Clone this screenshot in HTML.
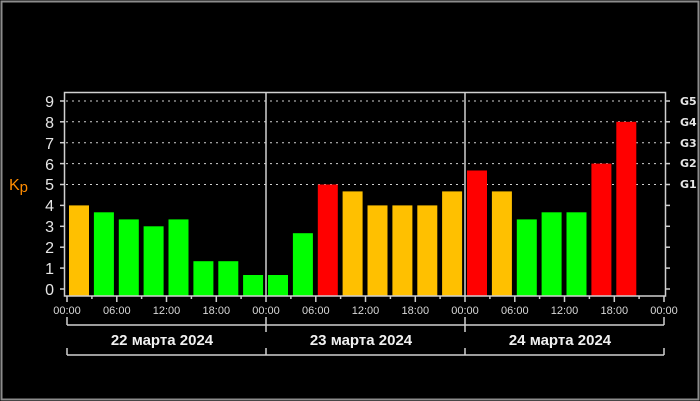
<!DOCTYPE html>
<html><head><meta charset="utf-8"><style>
html,body{margin:0;padding:0;background:#000;width:700px;height:401px;overflow:hidden}
svg{display:block}
</style></head><body>
<svg width="700" height="401" xmlns="http://www.w3.org/2000/svg" font-family="Liberation Sans, DejaVu Sans, sans-serif">
<rect x="0" y="0" width="700" height="401" fill="#000"/>
<rect x="1.5" y="1.5" width="697" height="398" fill="none" stroke="#8c8c8c" stroke-width="2"/>
<!-- gridlines -->
<g stroke="#cfcfcf" stroke-width="1" stroke-dasharray="2,4">
<line x1="66" y1="101" x2="664" y2="101"/>
<line x1="66" y1="121.8" x2="664" y2="121.8"/>
<line x1="66" y1="142.7" x2="664" y2="142.7"/>
<line x1="66" y1="163.6" x2="664" y2="163.6"/>
<line x1="66" y1="184.5" x2="664" y2="184.5"/>
</g>
<!-- bars -->
<g>
<rect x="69" y="205.4" width="20" height="90.6" fill="#ffc000"/>
<rect x="93.9" y="212.3" width="20" height="83.7" fill="#00ff00"/>
<rect x="118.8" y="219.4" width="20" height="76.6" fill="#00ff00"/>
<rect x="143.6" y="226.3" width="20" height="69.7" fill="#00ff00"/>
<rect x="168.5" y="219.4" width="20" height="76.6" fill="#00ff00"/>
<rect x="193.4" y="261.2" width="20" height="34.8" fill="#00ff00"/>
<rect x="218.3" y="261.2" width="20" height="34.8" fill="#00ff00"/>
<rect x="243.1" y="275" width="20" height="21" fill="#00ff00"/>
<rect x="268" y="275" width="20" height="21" fill="#00ff00"/>
<rect x="292.9" y="233.2" width="20" height="62.8" fill="#00ff00"/>
<rect x="317.8" y="184.5" width="20" height="111.5" fill="#ff0000"/>
<rect x="342.6" y="191.4" width="20" height="104.6" fill="#ffc000"/>
<rect x="367.5" y="205.4" width="20" height="90.6" fill="#ffc000"/>
<rect x="392.4" y="205.4" width="20" height="90.6" fill="#ffc000"/>
<rect x="417.3" y="205.4" width="20" height="90.6" fill="#ffc000"/>
<rect x="442.1" y="191.4" width="20" height="104.6" fill="#ffc000"/>
<rect x="467" y="170.5" width="20" height="125.5" fill="#ff0000"/>
<rect x="491.9" y="191.4" width="20" height="104.6" fill="#ffc000"/>
<rect x="516.8" y="219.4" width="20" height="76.6" fill="#00ff00"/>
<rect x="541.6" y="212.3" width="20" height="83.7" fill="#00ff00"/>
<rect x="566.5" y="212.3" width="20" height="83.7" fill="#00ff00"/>
<rect x="591.4" y="163.6" width="20" height="132.4" fill="#ff0000"/>
<rect x="616.3" y="121.8" width="20" height="174.2" fill="#ff0000"/>
</g>
<!-- frame -->
<g stroke="#d0d0d0" stroke-width="1.5" fill="none">
<rect x="64.5" y="92.5" width="601" height="203.5"/>
<line x1="266" y1="92" x2="266" y2="296"/>
<line x1="465" y1="92" x2="465" y2="296"/>
</g>
<!-- y ticks -->
<g stroke="#d0d0d0" stroke-width="1.5">
<line x1="60" y1="101" x2="64" y2="101"/><line x1="60" y1="121.8" x2="64" y2="121.8"/><line x1="60" y1="142.7" x2="64" y2="142.7"/><line x1="60" y1="163.6" x2="64" y2="163.6"/><line x1="60" y1="184.5" x2="64" y2="184.5"/><line x1="60" y1="205.4" x2="64" y2="205.4"/><line x1="60" y1="226.3" x2="64" y2="226.3"/><line x1="60" y1="247.2" x2="64" y2="247.2"/><line x1="60" y1="268.1" x2="64" y2="268.1"/><line x1="60" y1="289" x2="64" y2="289"/>
<line x1="666" y1="101" x2="670" y2="101"/><line x1="666" y1="121.8" x2="670" y2="121.8"/><line x1="666" y1="142.7" x2="670" y2="142.7"/><line x1="666" y1="163.6" x2="670" y2="163.6"/><line x1="666" y1="184.5" x2="670" y2="184.5"/><line x1="666" y1="205.4" x2="670" y2="205.4"/><line x1="666" y1="226.3" x2="670" y2="226.3"/><line x1="666" y1="247.2" x2="670" y2="247.2"/><line x1="666" y1="268.1" x2="670" y2="268.1"/><line x1="666" y1="289" x2="670" y2="289"/>
</g>
<!-- x ticks -->
<g stroke="#d0d0d0" stroke-width="1.5">
<line x1="67" y1="296" x2="67" y2="302"/><line x1="91.9" y1="296" x2="91.9" y2="299"/><line x1="116.8" y1="296" x2="116.8" y2="302"/><line x1="141.6" y1="296" x2="141.6" y2="299"/><line x1="166.5" y1="296" x2="166.5" y2="302"/><line x1="191.4" y1="296" x2="191.4" y2="299"/><line x1="216.3" y1="296" x2="216.3" y2="302"/><line x1="241.1" y1="296" x2="241.1" y2="299"/><line x1="266" y1="296" x2="266" y2="302"/><line x1="290.9" y1="296" x2="290.9" y2="299"/><line x1="315.8" y1="296" x2="315.8" y2="302"/><line x1="340.6" y1="296" x2="340.6" y2="299"/><line x1="365.5" y1="296" x2="365.5" y2="302"/><line x1="390.4" y1="296" x2="390.4" y2="299"/><line x1="415.3" y1="296" x2="415.3" y2="302"/><line x1="440.1" y1="296" x2="440.1" y2="299"/><line x1="465" y1="296" x2="465" y2="302"/><line x1="489.9" y1="296" x2="489.9" y2="299"/><line x1="514.8" y1="296" x2="514.8" y2="302"/><line x1="539.6" y1="296" x2="539.6" y2="299"/><line x1="564.5" y1="296" x2="564.5" y2="302"/><line x1="589.4" y1="296" x2="589.4" y2="299"/><line x1="614.3" y1="296" x2="614.3" y2="302"/><line x1="639.1" y1="296" x2="639.1" y2="299"/><line x1="664" y1="296" x2="664" y2="302"/>
<!-- brackets -->
<line x1="67" y1="317" x2="67" y2="325"/>
<line x1="67" y1="325" x2="664" y2="325"/>
<line x1="664" y1="317" x2="664" y2="325"/>
<line x1="266" y1="317" x2="266" y2="332"/>
<line x1="465" y1="317" x2="465" y2="332"/>
<line x1="67" y1="348" x2="67" y2="355"/>
<line x1="67" y1="355" x2="664" y2="355"/>
<line x1="664" y1="348" x2="664" y2="355"/>
<line x1="266" y1="348" x2="266" y2="355"/>
<line x1="465" y1="348" x2="465" y2="355"/>
</g>
<!-- y labels -->
<g fill="#e6e6e6" font-size="16" text-anchor="end">
<text x="54" y="107">9</text><text x="54" y="128">8</text><text x="54" y="149">7</text><text x="54" y="170">6</text><text x="54" y="190">5</text><text x="54" y="211">4</text><text x="54" y="232">3</text><text x="54" y="253">2</text><text x="54" y="274">1</text><text x="54" y="295">0</text>
</g>
<text x="9" y="190" fill="#ff8c00" font-size="16">K<tspan font-size="15" dy="2">p</tspan></text>
<g fill="#e6e6e6" font-size="11" font-weight="bold" font-family="DejaVu Sans, sans-serif">
<text x="680" y="105">G5</text><text x="680" y="126">G4</text><text x="680" y="147">G3</text><text x="680" y="167">G2</text><text x="680" y="188">G1</text>
</g>
<!-- x labels -->
<g fill="#d8d8d8" font-size="11" text-anchor="middle">
<text x="67" y="314">00:00</text><text x="116.8" y="314">06:00</text><text x="166.5" y="314">12:00</text><text x="216.3" y="314">18:00</text><text x="266" y="314">00:00</text><text x="315.8" y="314">06:00</text><text x="365.5" y="314">12:00</text><text x="415.3" y="314">18:00</text><text x="465" y="314">00:00</text><text x="514.8" y="314">06:00</text><text x="564.5" y="314">12:00</text><text x="614.3" y="314">18:00</text><text x="664" y="314">00:00</text>
</g>
<g fill="#f0f0f0" font-size="15" font-weight="bold" text-anchor="middle">
<text x="162" y="345">22 марта 2024</text>
<text x="361" y="345">23 марта 2024</text>
<text x="560" y="345">24 марта 2024</text>
</g>
</svg>
</body></html>
